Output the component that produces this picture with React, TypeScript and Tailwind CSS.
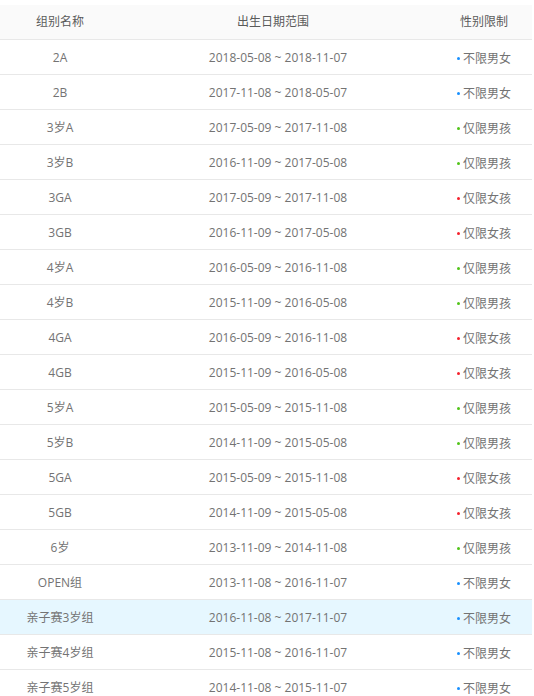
import React from "react";

type Row = { name: string; range: string; g: "any" | "boy" | "girl" };

const rows: Row[] = [
  { name: "2A", range: "2018-05-08 ~ 2018-11-07", g: "any" },
  { name: "2B", range: "2017-11-08 ~ 2018-05-07", g: "any" },
  { name: "3岁A", range: "2017-05-09 ~ 2017-11-08", g: "boy" },
  { name: "3岁B", range: "2016-11-09 ~ 2017-05-08", g: "boy" },
  { name: "3GA", range: "2017-05-09 ~ 2017-11-08", g: "girl" },
  { name: "3GB", range: "2016-11-09 ~ 2017-05-08", g: "girl" },
  { name: "4岁A", range: "2016-05-09 ~ 2016-11-08", g: "boy" },
  { name: "4岁B", range: "2015-11-09 ~ 2016-05-08", g: "boy" },
  { name: "4GA", range: "2016-05-09 ~ 2016-11-08", g: "girl" },
  { name: "4GB", range: "2015-11-09 ~ 2016-05-08", g: "girl" },
  { name: "5岁A", range: "2015-05-09 ~ 2015-11-08", g: "boy" },
  { name: "5岁B", range: "2014-11-09 ~ 2015-05-08", g: "boy" },
  { name: "5GA", range: "2015-05-09 ~ 2015-11-08", g: "girl" },
  { name: "5GB", range: "2014-11-09 ~ 2015-05-08", g: "girl" },
  { name: "6岁", range: "2013-11-09 ~ 2014-11-08", g: "boy" },
  { name: "OPEN组", range: "2013-11-08 ~ 2016-11-07", g: "any" },
  { name: "亲子赛3岁组", range: "2016-11-08 ~ 2017-11-07", g: "any" },
  { name: "亲子赛4岁组", range: "2015-11-08 ~ 2016-11-07", g: "any" },
  { name: "亲子赛5岁组", range: "2014-11-08 ~ 2015-11-07", g: "any" },
];

function Gender({ g }: { g: Row["g"] }) {
  const label = g === "any" ? "不限男女" : g === "boy" ? "仅限男孩" : "仅限女孩";
  const dot =
    g === "any" ? "bg-[#1890ff]" : g === "boy" ? "bg-[#52c41a]" : "bg-[#f5222d]";
  return (
    <span className="inline-flex items-center gap-[3px]">
      <span className={`w-[3px] h-[3px] rounded-full ${dot}`} />
      <span>{label}</span>
    </span>
  );
}

export default function App() {
  return (
    <div
      className="w-[534px] h-[696px] overflow-hidden bg-white pt-[5px] text-[12px] text-[#737373]"
      style={{ fontFamily: '"Open Sans", "Noto Sans CJK SC", sans-serif' }}
    >
      <div className="w-[532px]">
        <div className="grid grid-cols-[120px_316px_96px] h-[35px] items-center bg-[#fafafa] border-b border-[#e8e8e8] text-[#5a5a5a]">
          <div className="text-center">组别名称</div>
          <div className="text-center pr-[10px]">出生日期范围</div>
          <div className="text-center">性别限制</div>
        </div>
        {rows.map((r, i) => (
          <div
            key={i}
            className={`grid grid-cols-[120px_316px_96px] h-[35px] items-center border-b border-[#e8e8e8] pt-[1px] ${
              i === 16 ? "bg-[#e6f7ff]" : "bg-white"
            }`}
          >
            <div className="text-center">{r.name}</div>
            <div className="text-center">{r.range}</div>
            <div className="text-center">
              <Gender g={r.g} />
            </div>
          </div>
        ))}
      </div>
    </div>
  );
}
